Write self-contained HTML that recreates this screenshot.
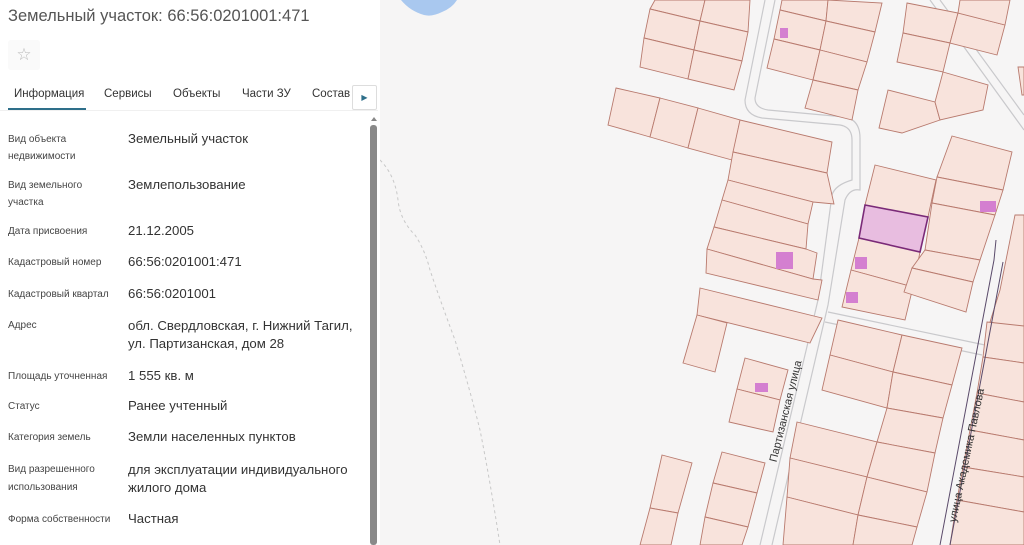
<!DOCTYPE html>
<html><head><meta charset="utf-8"><style>
*{margin:0;padding:0;box-sizing:border-box}
body{width:1024px;height:545px;overflow:hidden;background:#f6f6f6;font-family:"Liberation Sans",sans-serif;position:relative}
#map{position:absolute;left:0;top:0}
#panel{position:absolute;left:0;top:0;width:380px;height:545px;background:#fff}
.t{position:absolute;white-space:nowrap}
.l{font-size:10px;color:#444;left:8px}
.v{font-size:13.2px;color:#333;left:128px}
</style></head><body>
<svg id="map" width="1024" height="545" viewBox="0 0 1024 545">
<rect width="1024" height="545" fill="#f6f5f5"/>
<path d="M401,0 L457,0 Q452,8 442,12 Q432,17 424,15 Q410,11 401,0Z" fill="#a9c8ef"/>
<path d="M380,160 Q395,175 398,200 Q400,220 415,235 Q425,250 430,270 Q440,300 455,340 Q470,390 480,430 Q490,480 500,545" fill="none" stroke="#c8c8c8" stroke-width="1" stroke-dasharray="3,3"/>
<g fill="none" stroke="#c9c9cc" stroke-width="1.2">
<path d="M765,0 L745,100 Q745,115 762,118 L840,125 Q852,127 852,140 L852,180 Q835,185 832,195 L818,300 L760,545"/>
<path d="M775,0 L755,98 Q755,108 768,110 L845,117 Q860,120 860,138 L860,190 Q850,188 845,200 L828,305 L772,545"/>
<path d="M930,0 L1024,130 M940,0 L1024,115"/>
<path d="M828,312 L985,345 M825,322 L982,355"/>
</g>
<g fill="#f8e3dc" stroke="#b87a6e" stroke-width="0.9">
<polygon points="655,0 705,0 700,21 650,9"/>
<polygon points="705,0 750,0 748,32 700,21"/>
<polygon points="650,9 700,21 694,50 644,38"/>
<polygon points="700,21 748,32 742,61 694,50"/>
<polygon points="644,38 694,50 688,79 640,67"/>
<polygon points="694,50 742,61 734,90 688,79"/>
<polygon points="782,0 828,0 826,21 780,10"/>
<polygon points="828,0 882,3 875,32 826,21"/>
<polygon points="780,10 826,21 820,50 774,39"/>
<polygon points="826,21 875,32 867,62 820,50"/>
<polygon points="774,39 820,50 813,80 767,68"/>
<polygon points="820,50 867,62 858,90 813,80"/>
<polygon points="813,80 858,90 852,120 805,108"/>
<polygon points="907,3 958,13 950,43 903,33"/>
<polygon points="958,13 1005,25 997,55 950,43"/>
<polygon points="903,33 950,43 943,72 897,62"/>
<polygon points="960,0 1010,0 1005,25 958,13"/>
<polygon points="888,90 935,102 940,120 902,133 879,128"/>
<polygon points="943,72 988,85 983,110 940,120 935,102"/>
<polygon points="616,88 660,98 650,137 608,125"/>
<polygon points="660,98 698,108 688,148 650,137"/>
<polygon points="698,108 740,120 732,160 688,148"/>
<polygon points="740,120 832,142 827,173 733,152"/>
<polygon points="733,152 827,173 834,204 813,202 728,180"/>
<polygon points="728,180 813,202 808,224 722,200"/>
<polygon points="722,200 808,224 806,249 714,227"/>
<polygon points="714,227 806,249 817,253 813,279 707,249"/>
<polygon points="707,249 813,279 822,280 818,300 706,273"/>
<polygon points="700,288 822,318 810,343 697,315"/>
<polygon points="697,315 727,323 715,372 683,363"/>
<polygon points="875,165 936,180 928,217 865,205"/>
<polygon points="859,238 920,252 913,287 851,270"/>
<polygon points="851,270 913,287 905,320 842,307"/>
<polygon points="952,136 1012,152 1003,190 937,177"/>
<polygon points="937,177 1003,190 995,215 932,203"/>
<polygon points="932,203 995,215 980,260 925,250"/>
<polygon points="925,250 980,260 973,282 912,268"/>
<polygon points="912,268 973,282 966,312 904,292"/>
<polygon points="1015,215 1024,215 1024,330 990,322 1000,290"/>
<polygon points="1018,67 1024,67 1024,95 1022,95"/>
<polygon points="745,358 788,370 780,400 737,389"/>
<polygon points="737,389 780,400 773,432 729,422"/>
<polygon points="662,455 692,463 678,513 650,508"/>
<polygon points="650,508 678,513 671,545 640,545"/>
<polygon points="722,452 765,463 757,493 713,483"/>
<polygon points="713,483 757,493 748,527 705,517"/>
<polygon points="705,517 748,527 742,545 700,545"/>
<polygon points="838,320 902,335 893,372 830,355"/>
<polygon points="830,355 893,372 887,408 822,390"/>
<polygon points="902,335 962,348 952,385 893,372"/>
<polygon points="893,372 952,385 943,418 887,408"/>
<polygon points="797,422 877,442 867,477 790,458"/>
<polygon points="790,458 867,477 858,515 787,497"/>
<polygon points="787,497 858,515 853,545 783,545"/>
<polygon points="887,408 943,418 935,453 877,442"/>
<polygon points="877,442 935,453 927,492 867,477"/>
<polygon points="867,477 927,492 917,527 858,515"/>
<polygon points="858,515 917,527 912,545 853,545"/>
<polygon points="987,322 1024,326 1024,363 983,357"/>
<polygon points="983,357 1024,363 1024,402 977,393"/>
<polygon points="977,393 1024,402 1024,440 970,430"/>
<polygon points="970,430 1024,440 1024,477 963,467"/>
<polygon points="963,467 1024,477 1024,512 957,500"/>
<polygon points="957,500 1024,512 1024,545 950,545"/>
</g>
<polygon points="865,205 928,217 920,252 859,238" fill="#e8bde0" stroke="#7a2a78" stroke-width="1.6"/>
<g fill="#d47fd0">
<rect x="780" y="28" width="8" height="10"/>
<rect x="776" y="252" width="17" height="17"/>
<rect x="855" y="257" width="12" height="12"/>
<rect x="846" y="292" width="12" height="11"/>
<rect x="980" y="201" width="16" height="11"/>
<rect x="755" y="383" width="13" height="9"/>
</g>
<g fill="none" stroke="#5a4a6a" stroke-width="1">
<path d="M996,240 L994,260 L940,545"/>
<path d="M1003,262 L950,545"/>
</g>
<text x="0" y="0" transform="translate(789,412) rotate(-76)" text-anchor="middle" font-family="Liberation Sans" font-size="11" fill="#333">Партизанская  улица</text>
<text x="0" y="0" transform="translate(970,456) rotate(-78)" text-anchor="middle" font-family="Liberation Sans" font-size="11" fill="#333">улица  Академика  Павлова</text>
</svg>
<div id="panel">
<div class="t" style="left:8px;top:7px;font-size:16.5px;color:#555">Земельный участок: 66:56:0201001:471</div>
<div style="position:absolute;left:8px;top:40px;width:32px;height:30px;background:#fafafa;border-radius:3px;color:#bbb;font-size:17px;text-align:center;line-height:29px">☆</div>
<div class="t" style="left:14px;top:88px;font-size:11.5px;color:#333">Информация</div>
<div class="t" style="left:104px;top:88px;font-size:11.5px;color:#333">Сервисы</div>
<div class="t" style="left:173px;top:88px;font-size:11.5px;color:#333">Объекты</div>
<div class="t" style="left:242px;top:88px;font-size:11.5px;color:#333">Части ЗУ</div>
<div class="t" style="left:312px;top:88px;font-size:11.5px;color:#333">Состав</div>
<div style="position:absolute;left:8px;top:108px;width:78px;height:2px;background:#2e6f8a"></div>
<div style="position:absolute;left:0;top:110px;width:378px;height:1px;background:#f0f0f0"></div>
<div style="position:absolute;left:352px;top:85px;width:25px;height:25px;border:1px solid #ddd;border-radius:2px;background:#fff;color:#2e6f8a;font-size:8px;text-align:center;line-height:23px">▶</div>
<div style="position:absolute;left:371px;top:117px;width:0;height:0;border-left:3px solid transparent;border-right:3px solid transparent;border-bottom:4px solid #888"></div>
<div style="position:absolute;left:370px;top:125px;width:7px;height:420px;background:#8a8a8a;border-radius:3px"></div>
<div class="t l" style="top:134px">Вид объекта</div><div class="t l" style="top:151px">недвижимости</div>
<div class="t v" style="top:131px">Земельный участок</div>
<div class="t l" style="top:180px">Вид земельного</div><div class="t l" style="top:197px">участка</div>
<div class="t v" style="top:177px">Землепользование</div>
<div class="t l" style="top:226px">Дата присвоения</div>
<div class="t v" style="top:223px">21.12.2005</div>
<div class="t l" style="top:257px">Кадастровый номер</div>
<div class="t v" style="top:254px">66:56:0201001:471</div>
<div class="t l" style="top:289px">Кадастровый квартал</div>
<div class="t v" style="top:286px">66:56:0201001</div>
<div class="t l" style="top:320px">Адрес</div>
<div class="t v" style="top:318px">обл. Свердловская, г. Нижний Тагил,</div>
<div class="t v" style="top:336px">ул. Партизанская, дом 28</div>
<div class="t l" style="top:371px">Площадь уточненная</div>
<div class="t v" style="top:368px">1 555 кв. м</div>
<div class="t l" style="top:401px">Статус</div>
<div class="t v" style="top:398px">Ранее учтенный</div>
<div class="t l" style="top:432px">Категория земель</div>
<div class="t v" style="top:429px">Земли населенных пунктов</div>
<div class="t l" style="top:464px">Вид разрешенного</div><div class="t l" style="top:482px">использования</div>
<div class="t v" style="top:462px">для эксплуатации индивидуального</div>
<div class="t v" style="top:480px">жилого дома</div>
<div class="t l" style="top:514px">Форма собственности</div>
<div class="t v" style="top:511px">Частная</div>
</div>
</body></html>
